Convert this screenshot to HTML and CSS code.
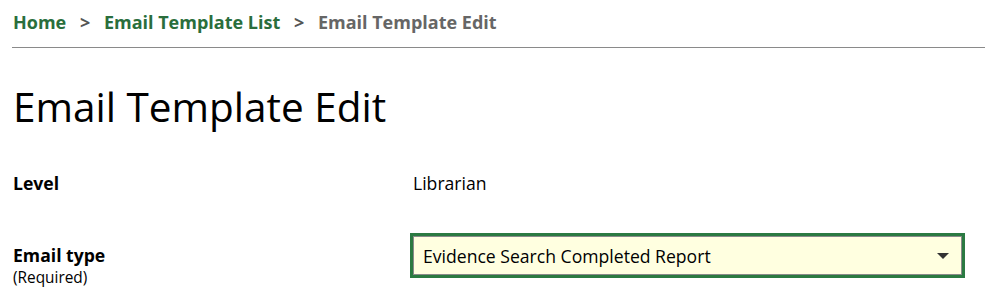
FILE: index.html
```html
<!DOCTYPE html>
<html lang="en">
<head>
    <meta charset="UTF-8">
    <title>Email Template Edit</title>
    <link rel="stylesheet" href="styles.css">
</head>
<body>
    <div class="page">
        <nav class="breadcrumb">
            <a href="#">Home</a>
            <span class="sep">&gt;</span>
            <a href="#">Email Template List</a>
            <span class="sep">&gt;</span>
            <span class="current">Email Template Edit</span>
        </nav>
        <h1>Email Template Edit</h1>
        <div class="form-row">
            <div class="form-label">Level</div>
            <div class="form-value">Librarian</div>
        </div>
        <div class="form-row">
            <label for="email-type" class="form-label">
                Email type
                <span class="required">(Required)</span>
            </label>
            <div class="form-value">
                <div class="select-wrap">
                    <select id="email-type" class="select-field">
                        <option>Evidence Search Completed Report</option>
                    </select>
                </div>
            </div>
        </div>
    </div>
</body>
</html>
```

FILE: styles.css
```css
body {
    margin: 0;
    font-family: 'Open Sans', sans-serif;
    color: #000000;
    background-color: #ffffff;
}

.page {
    padding: 0 0 0 12px;
}

.breadcrumb {
    padding: 10px 0 13px 1px;
    border-bottom: 1px solid #8a8a8a;
    font-size: 18px;
    font-weight: 700;
    line-height: 24px;
}

.breadcrumb a {
    color: #2a6e3c;
    text-decoration: none;
}

.breadcrumb .sep {
    color: #555555;
    margin: 0 9px;
}

.breadcrumb .current {
    color: #666666;
}

h1 {
    font-size: 40.5px;
    font-weight: 400;
    line-height: 56px;
    margin: 31px 0 36px 0;
    padding-left: 1px;
}

.form-row {
    display: flex;
    align-items: flex-start;
}

.form-row + .form-row {
    margin-top: 48px;
}

.form-label {
    width: 398px;
    flex: none;
    font-size: 17.6px;
    font-weight: 700;
    line-height: 24px;
    padding-left: 1px;
}

.required {
    display: block;
    font-size: 15.4px;
    font-weight: 400;
    line-height: 22px;
}

.form-value {
    font-size: 17.6px;
    line-height: 24px;
    padding-left: 2px;
}

.select-wrap {
    position: relative;
    width: 555px;
    margin: -10px 0 0 -3px;
}

.select-wrap::after {
    content: '';
    position: absolute;
    right: 16px;
    top: 20px;
    border-left: 6px solid transparent;
    border-right: 6px solid transparent;
    border-top: 6px solid #333333;
    pointer-events: none;
}

.select-field {
    appearance: none;
    -webkit-appearance: none;
    display: block;
    width: 100%;
    box-sizing: border-box;
    height: 45px;
    padding: 0 40px 0 10px;
    border: 3px solid #2b7a42;
    box-shadow: inset 0 0 0 1px #8a8a8a;
    border-radius: 0;
    background-color: #ffffe0;
    font-family: 'Open Sans', sans-serif;
    font-size: 17.6px;
    color: #000000;
}
```
